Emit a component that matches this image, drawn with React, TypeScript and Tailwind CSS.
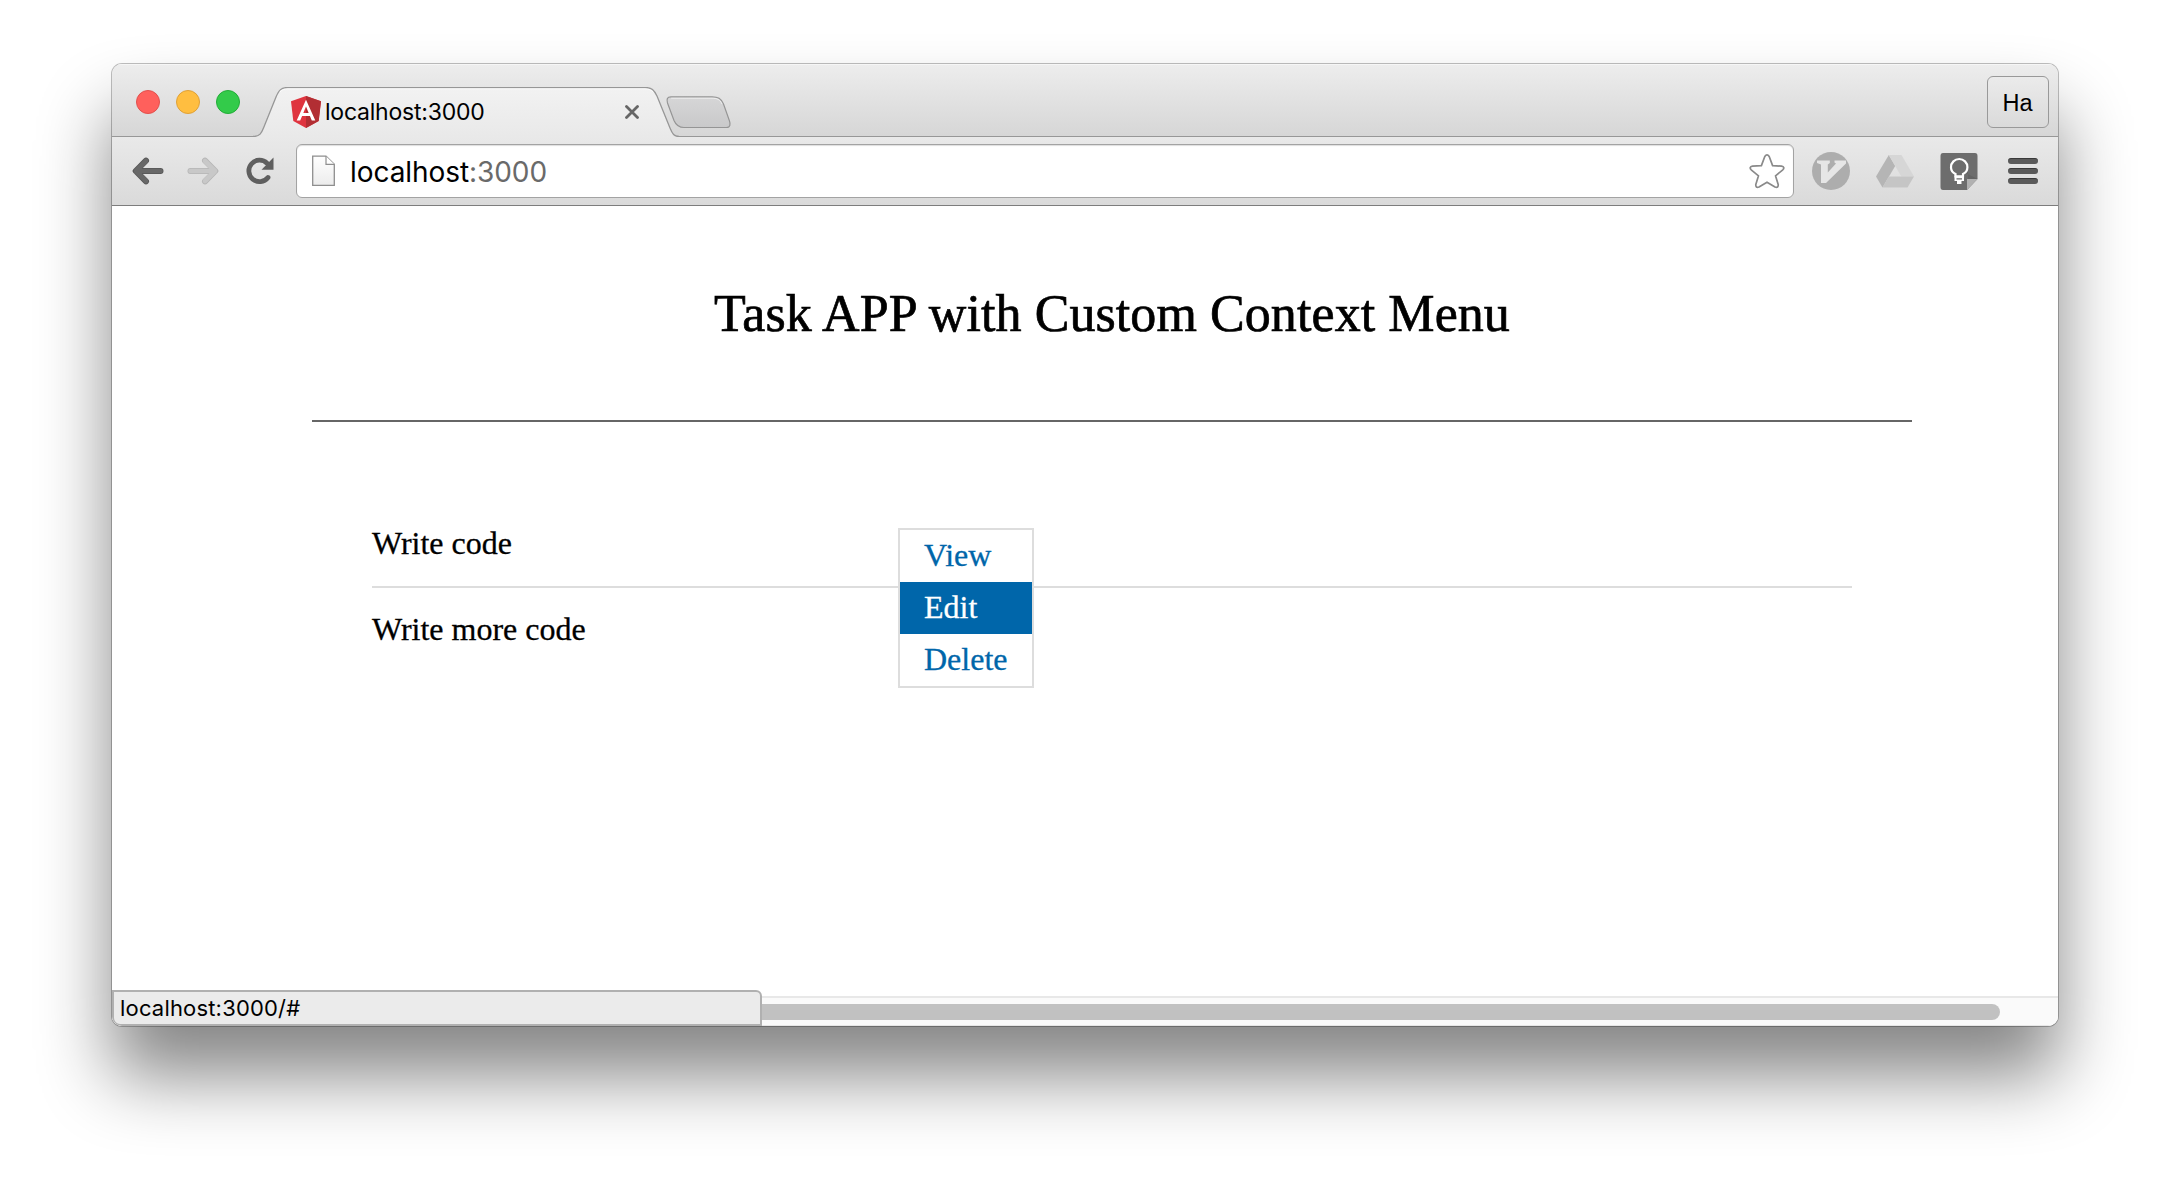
import React from "react";

const ui = "font-['Inter','Roboto',sans-serif]";
const serif = "font-['Liberation_Serif',serif]";

function AngularLogo() {
  return (
    <svg className="h-8 w-[30px]" viewBox="0 0 30 32">
      <path d="M15 0 0 5.2 2.3 25 15 32 27.7 25 30 5.2Z" fill="#df343f" />
      <path d="M15 0v32l12.700-7L30 5.200Z" fill="#b22e33" />
      <path d="M15 3.800 5.700 24.500h3.500l1.900-4.600h7.800l1.900 4.600h3.500ZM15 10.500l2.700 6.600h-5.400Z" fill="#fff" fillRule="evenodd" />
    </svg>
  );
}

function Tab() {
  return (
    <div className="relative mt-[23px] h-[50px] w-[430px] shrink-0">
      <svg className="absolute inset-0 h-[50px] w-[430px]" viewBox="0 0 430 50">
        <defs>
          <linearGradient id="tab" x1="0" y1="0" x2="0" y2="1">
            <stop offset="0" stopColor="#f2f2f2" />
            <stop offset="1" stopColor="#e9e9e9" />
          </linearGradient>
        </defs>
        <path d="M2 49.500C9 49.500 10.500 46 12.500 41L25 10C28 3 30 .500 37 .500H394C401 .500 403 3 406 9L419 41C421.500 47 423 49.500 428 49.500V50H2Z" fill="url(#tab)" />
        <path d="M2 49.500C9 49.500 10.500 46 12.500 41L25 10C28 3 30 .500 37 .500H394C401 .500 403 3 406 9L419 41C421.500 47 423 49.500 428 49.500" fill="none" stroke="#979797" strokeWidth="1.300" />
        <path d="M29 5C31 2.500 33 1.800 37 1.800H394C398 1.800 400 3 402 5" fill="none" stroke="#fff" strokeOpacity=".8" />
      </svg>
      <div className={`relative flex h-[50px] items-center pl-[40px] pr-[42px] ${ui}`}>
        <AngularLogo />
        <span className="ml-[4px] text-[23px] tracking-[-0.22px] text-black">localhost:3000</span>
        <svg className="ml-auto h-[14px] w-[14px]" viewBox="0 0 14 14">
          <path d="M1.500 1.500l11 11M12.500 1.500l-11 11" stroke="#666" strokeWidth="2.800" strokeLinecap="round" />
        </svg>
      </div>
    </div>
  );
}

function TabStrip() {
  return (
    <div className="flex h-[73px] bg-[linear-gradient(#ededed,#d6d6d6)] shadow-[inset_0_1px_0_#f6f6f6,inset_0_-1px_0_#979797]">
      <div className="ml-6 mt-[26px] flex h-6 gap-4">
        <span className="h-6 w-6 rounded-full border border-[#e2504d] bg-[#ff605c]" />
        <span className="h-6 w-6 rounded-full border border-[#e0a136] bg-[#ffbe40]" />
        <span className="h-6 w-6 rounded-full border border-[#22ad37] bg-[#33cb4a]" />
      </div>
      <div className="w-[11px] shrink-0" />
      <Tab />
      <svg className="-ml-[15px] mt-[32px] h-[34px] w-[66px]" viewBox="0 0 66 34">
        <defs>
          <linearGradient id="newtab" x1="0" y1="0" x2="0" y2="1">
            <stop offset="0" stopColor="#d6d6d7" />
            <stop offset="1" stopColor="#c9c9ca" />
          </linearGradient>
        </defs>
        <path d="M5 .800H46C52 .800 55 2.500 57.500 8L63.500 25C64.500 28 64.500 31.500 60.500 31.500H18C12 31.500 9.500 28 8 24.500L1.500 7C.500 3.500 1 .800 5 .800Z" fill="url(#newtab)" stroke="#959595" strokeWidth="1.200" />
        <path d="M5.200 2.200H46C51 2.200 54 3.500 56 8" fill="none" stroke="#fff" strokeOpacity=".6" />
      </svg>
      <div className="ml-auto mr-[9px] mt-[12px] flex h-[52px] w-[62px] items-center justify-center rounded-[6px] border border-[#999] bg-[linear-gradient(#ebebeb,#dadada)] pr-[1px] pt-[4px] font-['Liberation_Sans',sans-serif] text-[23.500px] text-black">
        Ha
      </div>
    </div>
  );
}

function Arrow({ color, edge, flip }: { color: string; edge: string; flip?: boolean }) {
  return (
    <svg className={flip ? "h-[28px] w-[32px] -scale-x-100" : "h-[28px] w-[32px]"} viewBox="0 0 32 28">
      <path d="M14 3.700 3.700 14 14 24.300M4 14h24.500" fill="none" stroke={edge} strokeWidth="6" strokeLinecap="round" strokeLinejoin="round" />
      <path d="M14 4 4 14 14 24M4 14h24.500" fill="none" stroke={color} strokeWidth="4.600" strokeLinecap="round" strokeLinejoin="round" />
    </svg>
  );
}

function Toolbar() {
  return (
    <div className="flex h-[69px] items-center border-b border-[#7d7d7d] bg-[linear-gradient(#e9e9e9,#dadada)] pl-[20px] pr-[20px]">
      <Arrow color="#686868" edge="#565656" />
      <span className="w-[23px]" />
      <Arrow color="#c8c8c8" edge="#b6b6b6" flip />
      <svg className="ml-[27px] h-[28px] w-[30px]" viewBox="0 0 30 28">
        <path d="M22 20.500A10.700 10.700 0 1 1 21 6.200" fill="none" stroke="#5f5f5f" strokeWidth="4.800" strokeLinecap="round" />
        <path d="M27.500 .500V12.700H15.500Z" fill="#5f5f5f" />
      </svg>
      <div className={`ml-[20px] flex h-[54px] w-[1498px] items-center rounded-[6px] border border-[#a3a3a3] bg-white pl-[15px] pr-[8px] shadow-[inset_0_1px_1px_#dedede] ${ui}`}>
        <svg className="h-[32px] w-[23px]" viewBox="0 0 23 32">
          <defs>
            <linearGradient id="page" x1="0" y1="0" x2="0" y2="1">
              <stop offset="0" stopColor="#fff" />
              <stop offset="1" stopColor="#ececec" />
            </linearGradient>
          </defs>
          <path d="M.700 1.200H14L22.300 9.300V30.300H.700Z" fill="url(#page)" stroke="#8e8e8e" strokeWidth="1.300" />
          <path d="M14 1.200V9.300H22.300" fill="#fff" stroke="#8e8e8e" strokeWidth="1.200" />
        </svg>
        <span className="ml-[15px] mt-[2px] text-[28px] tracking-[-0.07px] text-black">
          localhost<span className="text-[#6a6a6a]">:3000</span>
        </span>
        <svg className="ml-auto h-[36px] w-[36px]" viewBox="0 0 36 36">
          <path d="M15.800 3.500Q18 .200 20.200 3.500L23.600 12.600 32.500 13.200Q36.300 14 33.800 16.800L26.500 22.800 29.200 31.500Q29.500 35.300 26 34L18 29.200 10 34Q6.500 35.300 6.800 31.500L9.500 22.800 2.200 16.800Q-.300 14 3.500 13.200L12.400 12.600Z" fill="#fff" stroke="#8a8a8a" strokeWidth="1.700" strokeLinejoin="round" />
        </svg>
      </div>
      <svg className="ml-[18px] h-[38px] w-[38px]" viewBox="0 0 38 38">
        <circle cx="19" cy="19" r="19" fill="#adadad" />
        <path d="M5 8.500H17.800V11L15.800 12.500V20.500L24 11.500 22.500 10.500V8.500H34V11.500L14 31H9V12.500L5 11Z" fill="#e6e6e6" />
      </svg>
      <svg className="ml-[26px] h-[34px] w-[38px]" viewBox="0 0 38 34">
        <path d="M12.800 1 19.200 12 6.500 33.500 0 22.500Z" fill="#b5b5b5" />
        <path d="M12.800 1H25.500L38 22.500H25.300Z" fill="#d6d6d6" />
        <path d="M12.800 22.500H38L31.500 33.500H6.500Z" fill="#c5c5c5" />
      </svg>
      <svg className="ml-[26px] h-[37px] w-[38px]" viewBox="0 0 38 37">
        <path d="M3 0H35Q37.500 0 37.500 3V26L27 37H3Q.500 37 .500 34V3Q.500 0 3 0Z" fill="#6d6d6d" />
        <path d="M24 19 37.500 26H28V14Z" fill="#646464" />
        <path d="M27 26H37.500L27 37Z" fill="#b1b1b1" />
        <path d="M15.500 23.500V21C12.500 19.500 11 17.200 11 14.200A8.200 8.200 0 0 1 27.400 14.200C27.400 17.200 26 19.500 23 21V23.500Z" fill="none" stroke="#fff" strokeWidth="2.200" />
        <path d="M14.500 22.500H24V28H21.500V31H17V28H14.500Z" fill="#fff" />
        <path d="M16.500 25.800H22" stroke="#6d6d6d" strokeWidth="1.200" />
      </svg>
      <div className="ml-auto flex w-[30px] flex-col gap-[4px]">
        {[0, 1, 2].map((i) => (
          <span key={i} className="h-[6px] rounded-full border-t border-[#3a3a3a] bg-[#5a5a5a]" />
        ))}
      </div>
    </div>
  );
}

function ContextMenu() {
  const items = ["View", "Edit", "Delete"];
  return (
    <ul className="absolute left-[786px] top-[322px] w-[136px] border-2 border-[#ddd] bg-white text-[32px] leading-[50px]">
      {items.map((item) => (
        <li key={item} className={item === "Edit" ? "h-[52px] bg-[#0066aa] pl-6 text-white [-webkit-text-stroke:0.3px]" : "h-[52px] bg-white pl-6 text-[#0066aa] [-webkit-text-stroke:0.3px]"}>
          {item}
        </li>
      ))}
    </ul>
  );
}

function Page() {
  return (
    <div className={`relative flex flex-1 flex-col bg-white text-black ${serif}`}>
      <h1 className="ml-[200px] flex h-[216px] w-[1600px] justify-center border-b-2 border-[#666] pt-[78px] text-[52px] leading-[60px] tracking-[0.08px] [-webkit-text-stroke:0.7px]">
        Task APP with Custom Context Menu
      </h1>
      <ul className="ml-[260px] mt-[80px] w-[1480px] text-[32px] [-webkit-text-stroke:0.3px]">
        <li className="h-[86px] border-b-2 border-[#ddd] pt-[15px] leading-[52px]">Write code</li>
        <li className="h-[84px] pt-[15px] leading-[52px]">Write more code</li>
      </ul>
      <ContextMenu />
      <div className="mt-auto flex h-[30px] items-center border-t-2 border-[#e8e8e8] bg-[#fafafa] shadow-[inset_0_-1px_0_#e6e6e6]">
        <div className="h-4 w-[1888px] rounded-r-full bg-[#c1c1c1]" />
      </div>
      <div className={`absolute bottom-0 left-0 flex h-[36px] w-[650px] items-center rounded-bl-[8px] rounded-tr-[6px] border-2 border-[#b0b0b0] bg-[#ebebeb] pl-[6px] text-[22px] tracking-[0.18px] ${ui}`}>
        localhost:3000/#
      </div>
    </div>
  );
}

export default function App() {
  return (
    <div className="h-[1186px] w-[2170px] overflow-hidden bg-white pl-[112px] pt-[64px]">
      <div className="flex h-[962px] w-[1946px] flex-col overflow-hidden rounded-[10px] shadow-[0_0_0_1px_rgba(0,0,0,0.25),0_50px_72px_rgba(0,0,0,0.48)]">
        <TabStrip />
        <Toolbar />
        <Page />
      </div>
    </div>
  );
}
